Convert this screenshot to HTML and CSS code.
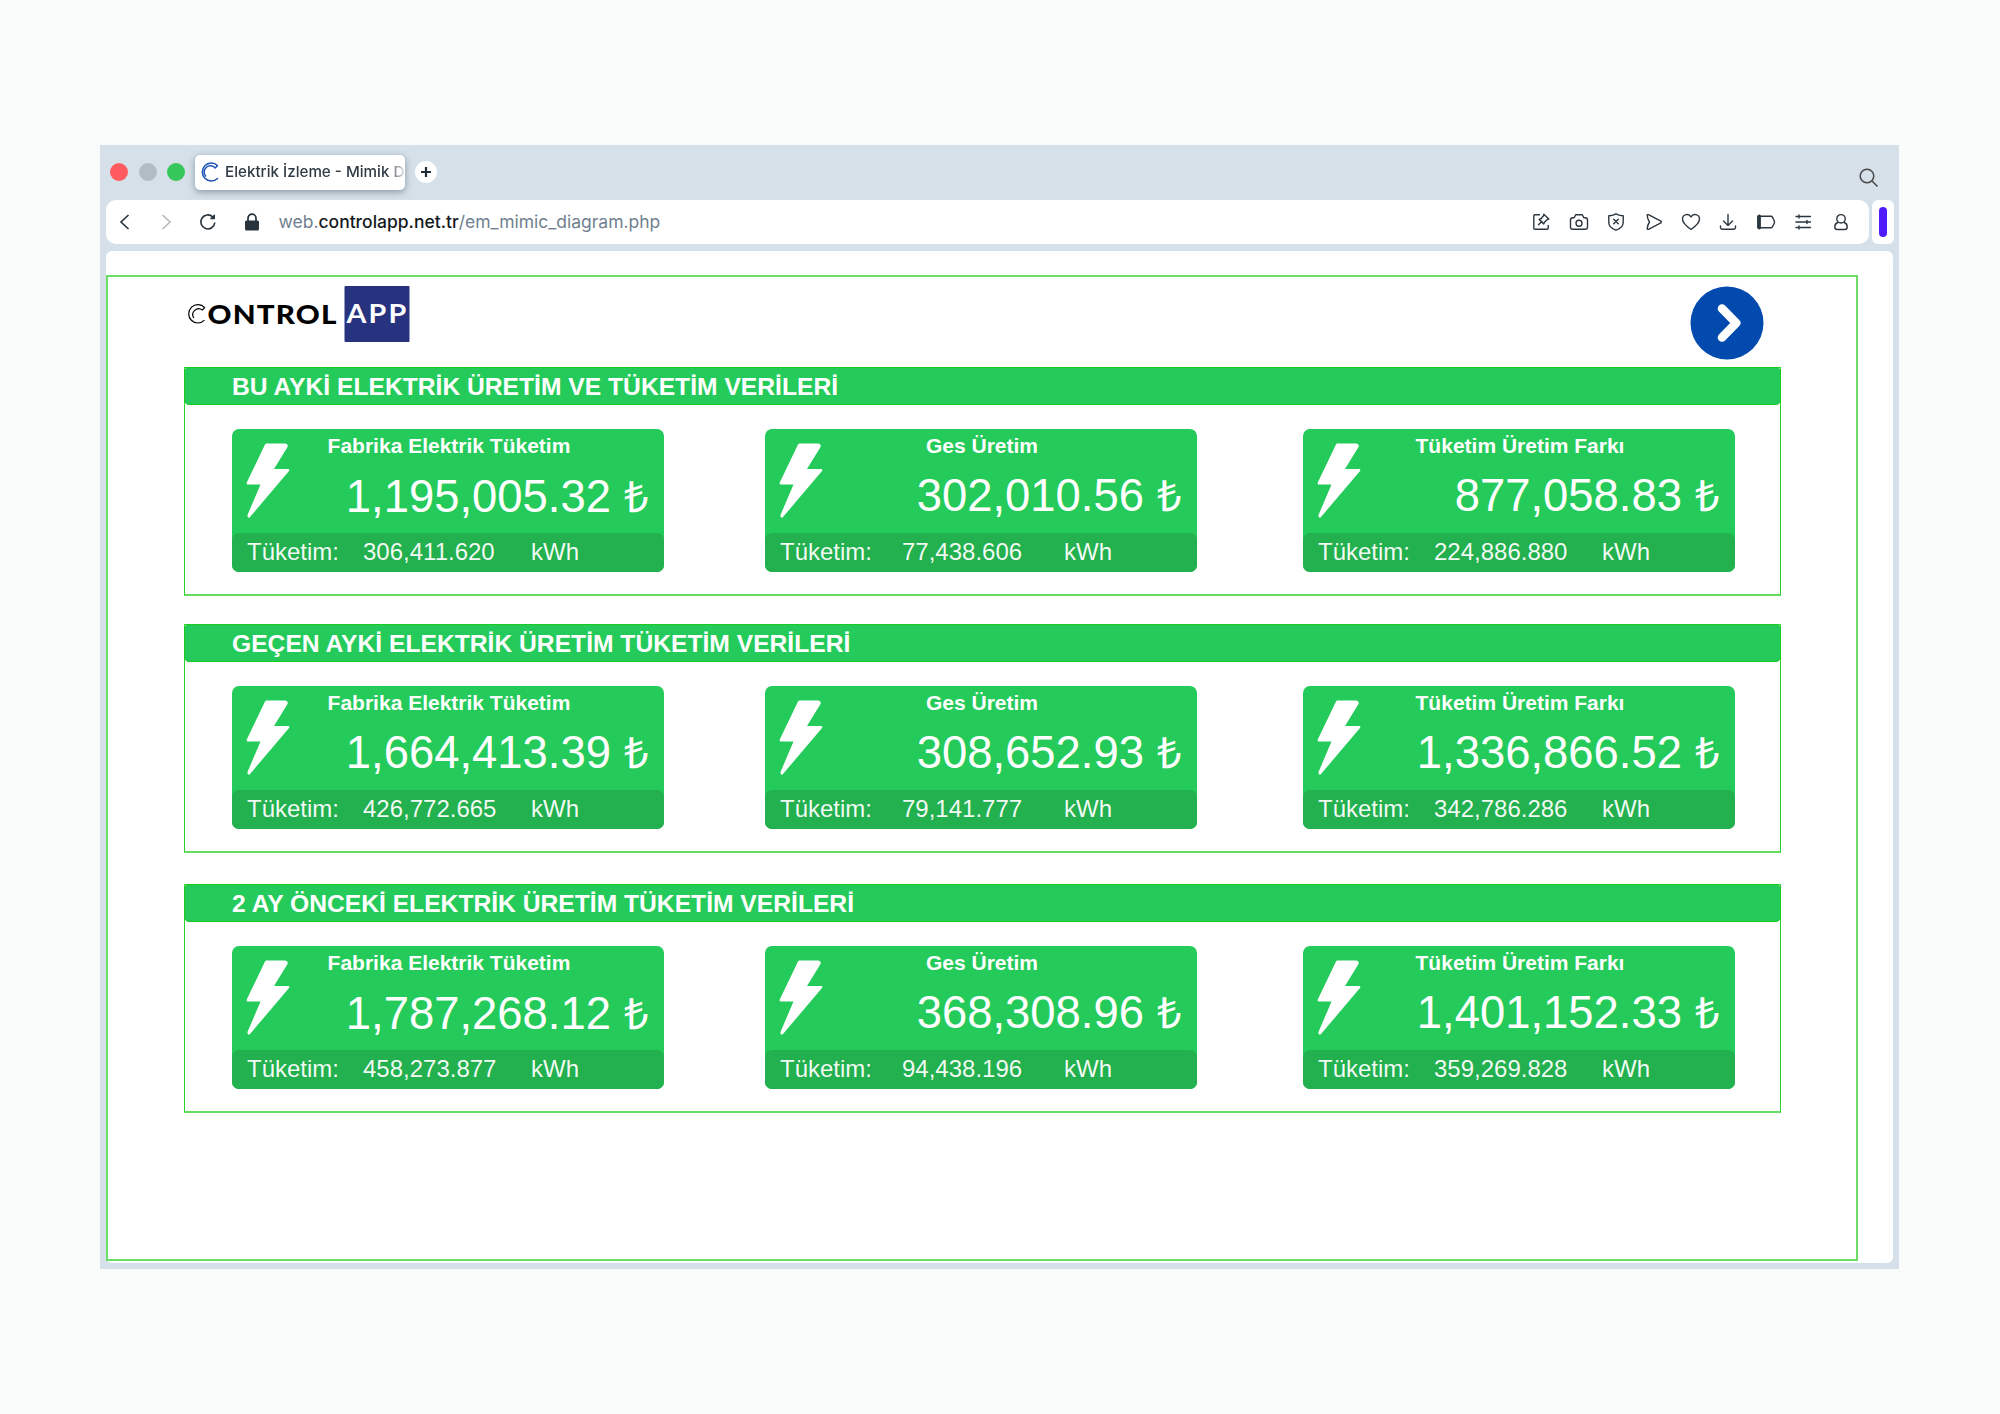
FILE: index.html
```html
<!DOCTYPE html>
<html lang="tr">
<head>
<meta charset="utf-8">
<title>Elektrik İzleme - Mimik Diyagram</title>
<link rel="stylesheet" href="styles.css">
</head>
<body>
<svg class="defs" width="0" height="0" aria-hidden="true">
  <symbol id="bolt" viewBox="0 0 44 76">
    <path d="M20 1.5h19.5q3.200 1 2 3.500L28 27h14.500q1.500.5.5 2L4 75q-1.500 1.500-2.500-.5V73L14.500 42.500H1.500q-1.500-.5-.5-2.500L19 2.500z" fill="#fff"/>
  </symbol>
</svg>
<div class="window">
  <div class="tabs">
    <span class="dot red"></span><span class="dot gray"></span><span class="dot green"></span>
    <div class="tab">
      <svg width="20" height="20" viewBox="0 0 20 20" fill="none" stroke="#1f52b5" stroke-width="1.5" stroke-linecap="round" stroke-linejoin="round"><path d="M17.500 16.500A9 9 0 1 1 17.500 3.500L15.200 6A6 6 0 0 0 5.600 14"/></svg>
      <span class="tab-title">Elektrik İzleme - Mimik D</span>
    </div>
    <span class="plus"><svg width="10" height="10" viewBox="0 0 10 10" stroke="#222c36" stroke-width="2.200"><path d="M5 0v10M0 5h10"/></svg></span>
    <svg class="search" width="20" height="20" viewBox="0 0 20 20" fill="none" stroke="#45474a" stroke-width="1.500"><circle cx="8" cy="8" r="6.800"/><path d="M12.800 12.800L18.500 18.500"/></svg>
  </div>
  <div class="toolbar">
    <div class="address">
      <div class="nav">
        <svg width="16" height="18" viewBox="0 0 16 18" stroke="#26323c"><path d="M11.500 2L4 9l7.500 7"/></svg>
        <svg width="16" height="18" viewBox="0 0 16 18" stroke="#b4bac0"><path d="M4.500 2L12 9l-7.500 7"/></svg>
        <svg width="18" height="18" viewBox="0 0 18 18" stroke="#26323c"><path d="M15.800 9.500A7 7 0 1 1 13.800 4"/><path d="M15.500 1.800v4h-4z" fill="#26323c" stroke-width="1"/></svg>
        <svg class="lock" width="16" height="18" viewBox="0 0 16 18"><rect x="1" y="7.500" width="14" height="10" rx="1.500" fill="#26323c"/><path d="M4 8V5.200a4 4 0 0 1 8 0V8" stroke="#26323c" stroke-width="1.700"/></svg>
      </div>
      <div class="url">web.<b>controlapp.net.tr</b>/em_mimic_diagram.php</div>
      <div class="tools">
        <svg viewBox="0 0 20 20"><path d="M8.500 2.800H3.800q-1 0-1 1v12.400q0 1 1 1h12.400q1 0 1-1v-2.700M7.500 12.800l3.500-3.500M8.200 7.500l2-1 2.300-2.800.3-1.400 5 4.800-1.500.4-2.600 2.400-1 2z"/></svg>
        <svg viewBox="0 0 20 20"><path d="M1.500 8q0-2.200 2.200-2.200h1.500l1.500-3h6.600l1.500 3h1.500q2.200 0 2.200 2.200V15q0 2.200-2.200 2.200H3.700Q1.500 17.200 1.500 15z"/><circle cx="10" cy="11.200" r="3"/></svg>
        <svg viewBox="0 0 20 20"><path d="M10 1.800q3.500 2 7.200 2v6.700q0 5-7.200 7.700-7.200-2.700-7.200-7.700V3.800q3.700 0 7.200-2zM7.700 7.200l4.600 4.600M12.300 7.200l-4.600 4.600"/></svg>
        <svg viewBox="0 0 20 20"><path d="M3.200 3.500q0-1.200 1.300-.8L16.800 9.200q1.200.8 0 1.600L4.500 17.300q-1.300.4-1.300-.8Q3.500 13 5.500 10 3.500 7 3.200 3.500z"/></svg>
        <svg viewBox="0 0 20 20"><path d="M10 17.500Q1.500 11.500 1.500 7a4.500 4.500 0 0 1 8.500-2 4.500 4.500 0 0 1 8.500 2Q18.500 11.500 10 17.500z"/></svg>
        <svg viewBox="0 0 20 20"><path d="M10 2.500v11M5.500 9l4.500 4.500L14.500 9M2.500 14v1.500q0 1.700 1.700 1.700h11.600q1.700 0 1.700-1.700V14"/></svg>
        <svg viewBox="0 0 20 20"><path d="M1.800 4.200h13q1.300 0 1.600 1l2 3.800v2l-2 3.800q-.3 1-1.600 1h-13z"/><path d="M3.300 4.200v11.600" stroke-width="3.200"/></svg>
        <svg viewBox="0 0 20 20"><path d="M3 4.500h14.500M3 10h14.500M3 15.500h14.500M6 3v3M14 8.500v3M6 14v3"/></svg>
        <svg viewBox="0 0 20 20"><circle cx="10" cy="6.800" r="4.200"/><path d="M6.800 10.500Q3.800 11.500 3.800 15q0 2.500 2.500 2.500h7.400q2.500 0 2.500-2.500 0-3.500-3-4.500"/></svg>
      </div>
    </div>
    <div class="side"><span></span></div>
  </div>
  <div class="page">
    <main class="board">
      <header class="top">
        <svg class="logo" width="224" height="58" viewBox="0 0 224 58">
          <g fill="none" stroke="#000" stroke-width="1.200"><path d="M17.500 34.200A9.200 9.200 0 1 1 17.700 21.600L15.400 23.900A6 6 0 0 0 6.800 32"/></g>
          <text class="logo-name" x="20.500" y="37.500" textLength="130" lengthAdjust="spacingAndGlyphs">ONTROL</text>
          <rect x="157.500" y="0" width="65" height="56" rx="1" fill="#28337f"/>
          <text class="logo-app" x="159.500" y="36.700" textLength="62" lengthAdjust="spacingAndGlyphs">APP</text>
        </svg>
        <svg class="next" width="74" height="74" viewBox="0 0 74 74"><circle cx="37" cy="37" r="36.500" fill="#024aad"/><path d="M32 22.500L46.200 37 32 51.500" fill="none" stroke="#fff" stroke-width="8.600" stroke-linecap="round" stroke-linejoin="round"/></svg>
      </header>

      <section class="group">
        <h2>BU AYKİ ELEKTRİK ÜRETİM VE TÜKETİM VERİLERİ</h2>
        <div class="cards">
          <article class="card low"><svg class="bolt"><use href="#bolt"/></svg><h3>Fabrika Elektrik Tüketim</h3><p class="amount">1,195,005.32 <span>₺</span></p><div class="usage"><span>Tüketim:</span><span>306,411.620</span><span>kWh</span></div></article>
          <article class="card ges"><svg class="bolt"><use href="#bolt"/></svg><h3>Ges Üretim</h3><p class="amount">302,010.56 <span>₺</span></p><div class="usage"><span>Tüketim:</span><span>77,438.606</span><span>kWh</span></div></article>
          <article class="card"><svg class="bolt"><use href="#bolt"/></svg><h3>Tüketim Üretim Farkı</h3><p class="amount">877,058.83 <span>₺</span></p><div class="usage"><span>Tüketim:</span><span>224,886.880</span><span>kWh</span></div></article>
        </div>
      </section>

      <section class="group">
        <h2>GEÇEN AYKİ ELEKTRİK ÜRETİM TÜKETİM VERİLERİ</h2>
        <div class="cards">
          <article class="card"><svg class="bolt"><use href="#bolt"/></svg><h3>Fabrika Elektrik Tüketim</h3><p class="amount">1,664,413.39 <span>₺</span></p><div class="usage"><span>Tüketim:</span><span>426,772.665</span><span>kWh</span></div></article>
          <article class="card ges"><svg class="bolt"><use href="#bolt"/></svg><h3>Ges Üretim</h3><p class="amount">308,652.93 <span>₺</span></p><div class="usage"><span>Tüketim:</span><span>79,141.777</span><span>kWh</span></div></article>
          <article class="card"><svg class="bolt"><use href="#bolt"/></svg><h3>Tüketim Üretim Farkı</h3><p class="amount">1,336,866.52 <span>₺</span></p><div class="usage"><span>Tüketim:</span><span>342,786.286</span><span>kWh</span></div></article>
        </div>
      </section>

      <section class="group last">
        <h2>2 AY ÖNCEKİ ELEKTRİK ÜRETİM TÜKETİM VERİLERİ</h2>
        <div class="cards">
          <article class="card low"><svg class="bolt"><use href="#bolt"/></svg><h3>Fabrika Elektrik Tüketim</h3><p class="amount">1,787,268.12 <span>₺</span></p><div class="usage"><span>Tüketim:</span><span>458,273.877</span><span>kWh</span></div></article>
          <article class="card ges"><svg class="bolt"><use href="#bolt"/></svg><h3>Ges Üretim</h3><p class="amount">368,308.96 <span>₺</span></p><div class="usage"><span>Tüketim:</span><span>94,438.196</span><span>kWh</span></div></article>
          <article class="card"><svg class="bolt"><use href="#bolt"/></svg><h3>Tüketim Üretim Farkı</h3><p class="amount">1,401,152.33 <span>₺</span></p><div class="usage"><span>Tüketim:</span><span>359,269.828</span><span>kWh</span></div></article>
        </div>
      </section>
    </main>
  </div>
</div>
</body>
</html>
```
FILE: styles.css
```css
* { box-sizing: border-box; }
body {
  margin: 0;
  height: 1414px;
  padding: 145px 101px 0 100px;
  background: #fafcfb;
  font-family: "Liberation Sans", Arial, sans-serif;
  overflow: hidden;
}
h2, h3, p { margin: 0; }
svg { display: block; flex: none; }
.defs { position: absolute; }

.window {
  display: flex;
  flex-direction: column;
  height: 1124px;
  padding: 0 6px 6px;
  background: #d6e0e8;
}

/* Tab strip */
.tabs {
  display: flex;
  align-items: center;
  height: 55px;
  padding: 0 14px 1px 4px;
}
.dot { width: 18px; height: 18px; border-radius: 50%; margin-right: 10.500px; }
.red { background: #ff5b5f; }
.gray { background: #b2bcc5; }
.green { background: #35c75a; margin-right: 10px; }
.tab {
  display: flex;
  align-items: center;
  gap: 5px;
  width: 210px;
  height: 35px;
  padding: 0 5px;
  border-radius: 5px;
  background: #fff;
  box-shadow: 0 2px 7px rgba(60, 75, 95, .5);
}
.tab-title {
  white-space: nowrap;
  font: 450 15.200px/24px Inter, sans-serif;
  color: #303b45;
  mask-image: linear-gradient(90deg, #000 90%, transparent 102%);
}
.plus {
  display: grid;
  place-items: center;
  width: 22px;
  height: 22px;
  margin-left: 10px;
  border-radius: 50%;
  background: #fff;
}
.search { margin: 11px 0 0 auto; }

/* Address bar */
.toolbar { display: flex; gap: 3px; height: 44px; }
.address {
  display: flex;
  align-items: center;
  flex: 1;
  border-radius: 10px;
  background: #fff;
}
.nav { display: flex; align-items: center; gap: 25px; padding-left: 11px; }
.nav svg { fill: none; stroke-width: 1.600; }
.nav .lock { margin-left: 2px; }
.url {
  margin-left: 18.500px;
  font: 400 17.500px/24px Inter, sans-serif;
  color: #708090;
  white-space: nowrap;
}
.url b { font-weight: 500; color: #14191e; }
.tools { display: flex; gap: 17.400px; margin-left: auto; padding-right: 18.500px; }
.tools svg {
  width: 20px;
  height: 20px;
  fill: none;
  stroke: #2b363f;
  stroke-width: 1.400;
  stroke-linejoin: round;
  stroke-linecap: round;
}
.side {
  display: grid;
  place-items: center;
  width: 22px;
  margin-right: -1px;
  border-radius: 6px;
  background: #fff;
}
.side span { width: 8px; height: 30px; border-radius: 4px; background: #4f1cff; }

/* Dashboard */
.page {
  flex: 1;
  margin-top: 7px;
  padding-top: 24px;
  border-radius: 6px;
  background: #fff;
}
.board {
  width: 1752px;
  height: 986px;
  padding: 9px 76px 0;
  border: 2px solid #6bde68;
}
.top {
  display: flex;
  justify-content: space-between;
  height: 81px;
  padding: 0 16px 0 3px;
}
.logo-name { font: 900 26px Lato, sans-serif; letter-spacing: 1px; }
.logo-app { font: 700 26px Lato, sans-serif; letter-spacing: 2px; fill: #fff; }
.group {
  width: 1597px;
  height: 229px;
  margin-bottom: 28px;
  border: 1px solid #2bd32f;
  border-bottom: 2px solid #63dc60;
}
.group.last { margin-top: 31px; }
.group h2 {
  height: 38px;
  margin: -1px;
  padding-left: 47px;
  border: 1px solid #17cb20;
  border-radius: 5px;
  background: #25cb5a;
  color: #fff;
  font-size: 24.650px;
  line-height: 37px;
  white-space: nowrap;
}
.cards { display: flex; margin: 25px 0 0 47px; }
.card {
  position: relative;
  width: 432px;
  height: 143px;
  border-radius: 7px;
  background: #25cb5a;
  color: #fff;
}
.card.ges { margin: 0 106px 0 101px; }
.bolt { position: absolute; left: 14px; top: 13px; width: 44px; height: 76px; }
.card h3 {
  height: 34px;
  padding-left: 2px;
  text-align: center;
  font-size: 21px;
  line-height: 33px;
}
.amount {
  height: 70px;
  padding-right: 15.500px;
  text-align: right;
  font-size: 45.400px;
  line-height: 65px;
  white-space: nowrap;
}
.amount span { font-size: 43px; }
.low .amount { line-height: 67px; }
.usage {
  display: grid;
  grid-template-columns: 116px 168px 1fr;
  height: 39px;
  padding-left: 15px;
  border-radius: 7px;
  background: #23b04e;
  color: rgba(255, 255, 255, .94);
  font-size: 24px;
  line-height: 38px;
}
.ges .usage { grid-template-columns: 122px 162px 1fr; }
```
